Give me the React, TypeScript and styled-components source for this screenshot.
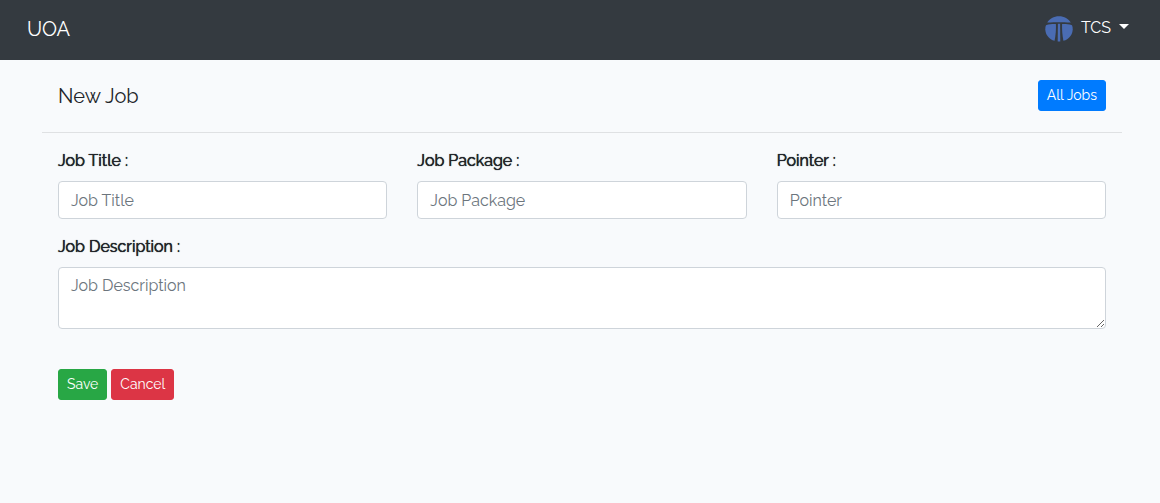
import React from "react";
import styled, { createGlobalStyle } from "styled-components";

const GlobalStyle = createGlobalStyle`
  *, *::before, *::after { box-sizing: border-box; }
  body {
    margin: 0;
    background: #f8fafc;
    color: #212529;
    font-family: Raleway, Lato, "Liberation Sans", sans-serif;
    font-size: 16px;
    line-height: 24px;
  }
`;

const Navbar = styled.header`
  display: flex;
  align-items: center;
  justify-content: space-between;
  height: 60px;
  padding: 0 31px 4px 27px;
  background: #343a40;
`;

const Brand = styled.a`
  color: #fff;
  font-size: 20px;
  line-height: 32px;
  padding-top: 2px;
  text-decoration: none;
`;

const UserMenu = styled.button`
  display: flex;
  align-items: center;
  gap: 8px;
  padding: 0;
  border: 0;
  background: none;
  color: #fff;
  font: inherit;
  cursor: pointer;

  &::after {
    content: "";
    margin-bottom: 4px;
    border: 5px solid transparent;
    border-top-color: #fff;
    border-bottom: 0;
  }
`;

const Page = styled.main`
  margin: 0 38px 0 42px;
`;

const PageHeader = styled.div`
  display: flex;
  align-items: flex-start;
  justify-content: space-between;
  padding: 20px 16px;
  border-bottom: 1px solid #dfe1e3;
`;

const Title = styled.h1`
  margin: 0;
  font-size: 20px;
  font-weight: 400;
  line-height: 32px;
`;

const tones = { primary: "#007bff", success: "#28a745", danger: "#dc3545" };

const Button = styled.button<{ $tone: keyof typeof tones }>`
  padding: 4px 8px;
  border: 1px solid ${({ $tone }) => tones[$tone]};
  border-radius: 3px;
  background: ${({ $tone }) => tones[$tone]};
  color: #fff;
  font-family: inherit;
  font-size: 14px;
  line-height: 21px;
  text-decoration: none;
  cursor: pointer;
`;

const Form = styled.form`
  padding: 16px;
`;

const Row = styled.div`
  display: grid;
  grid-template-columns: repeat(3, 1fr);
  gap: 16px 30px;
`;

const Field = styled.div<{ $wide?: boolean }>`
  display: flex;
  flex-direction: column;
  gap: 8px;
  grid-column: ${({ $wide }) => ($wide ? "1 / -1" : "auto")};
`;

const Label = styled.label`
  text-shadow: 0 0 1px currentColor, 0 0 0 currentColor;
`;

const Input = styled.input`
  width: 100%;
  height: 38px;
  padding: 6px 12px;
  border: 1px solid #ced4da;
  border-radius: 4px;
  background: #fff;
  color: #495057;
  font: inherit;

  &::placeholder { color: #6c757d; opacity: 1; }
`;

const TextArea = styled(Input).attrs({ as: "textarea" })`
  display: block;
  height: 62px;
  resize: vertical;
`;

const Actions = styled.div`
  display: flex;
  gap: 4px;
  margin-top: 40px;
`;

const LogoMark = styled.svg`
  margin-top: 2px;
`;

const Logo = () => (
  <LogoMark width="28" height="26" viewBox="0 0 28 26" fill="#4a6cb3" aria-hidden="true">
    <path d="M2.2 6.600C4.400 2.800 8.800.3 14 .3S23.600 2.800 25.800 6.600C21 6.300 17.500 6.200 14 6.200S7 6.300 2.200 6.600Z" />
    <path d="M1 9.200C4.500 8.200 7.500 8 10.900 8.100C11.100 13.500 10.700 19.500 9.600 24.800C4.200 23.300.3 18.700.3 13.200C.3 11.700.5 10.300 1 9.200Z" />
    <path d="M27 9.200C23.500 8.200 20.500 8 17.100 8.100C16.900 13.500 17.300 19.500 18.400 24.800C23.800 23.300 27.700 18.700 27.700 13.200C27.700 11.700 27.500 10.300 27 9.200Z" />
    <path d="M12.900 7.800H15.100L15.300 25.500H12.700Z" />
  </LogoMark>
);

export default function App() {
  return (
    <>
      <GlobalStyle />
      <Navbar>
        <Brand href="#">UOA</Brand>
        <UserMenu type="button" aria-haspopup="menu">
          <Logo />
          TCS
        </UserMenu>
      </Navbar>
      <Page>
        <PageHeader>
          <Title>New Job</Title>
          <Button as="a" href="#" $tone="primary">All Jobs</Button>
        </PageHeader>
        <Form onSubmit={(event) => event.preventDefault()}>
          <Row>
            <Field>
              <Label htmlFor="title">Job Title :</Label>
              <Input id="title" placeholder="Job Title" />
            </Field>
            <Field>
              <Label htmlFor="package">Job Package :</Label>
              <Input id="package" placeholder="Job Package" />
            </Field>
            <Field>
              <Label htmlFor="pointer">Pointer :</Label>
              <Input id="pointer" placeholder="Pointer" />
            </Field>
            <Field $wide>
              <Label htmlFor="description">Job Description :</Label>
              <TextArea id="description" placeholder="Job Description" />
            </Field>
          </Row>
          <Actions>
            <Button type="submit" $tone="success">Save</Button>
            <Button type="button" $tone="danger">Cancel</Button>
          </Actions>
        </Form>
      </Page>
    </>
  );
}
